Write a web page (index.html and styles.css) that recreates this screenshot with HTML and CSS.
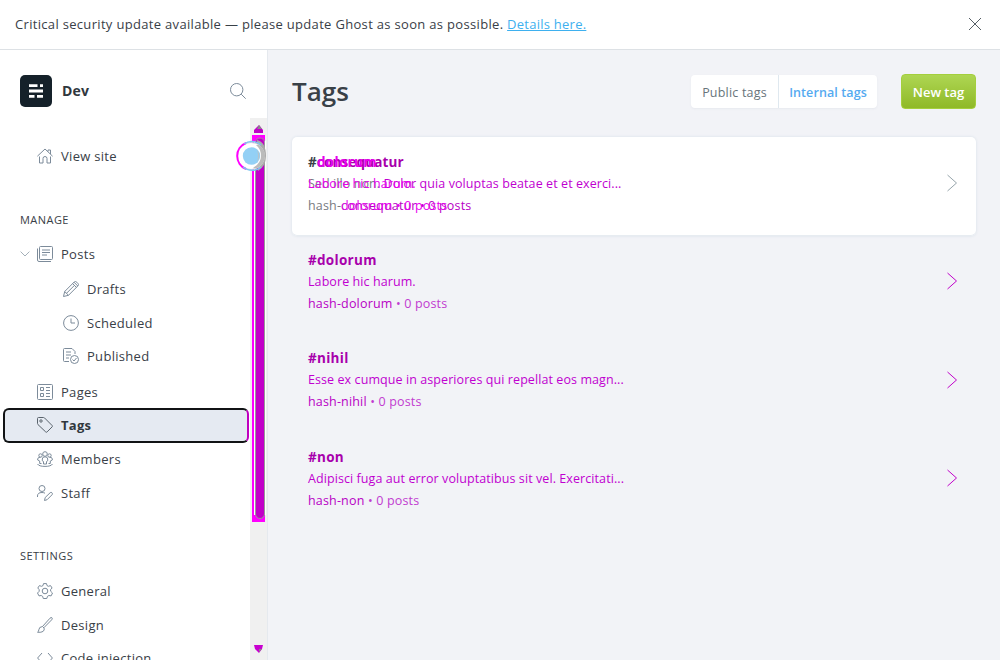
FILE: index.html
```html
<!DOCTYPE html>
<html lang="en">
<head>
<meta charset="utf-8">
<title>Tags</title>
<link rel="stylesheet" href="styles.css">
</head>
<body>
<div class="alert">
  <p class="alert-text"><span class="alert-msg">Critical security update available — please update Ghost as soon as possible.</span> <a class="alert-link">Details here.</a></p>
  <svg class="close" viewBox="0 0 14 14"><path d="M1 1l12 12M13 1L1 13"/></svg>
</div>
<div class="app">
  <aside class="sidebar">
    <header class="brand">
      <svg class="logo" viewBox="0 0 32 32"><rect width="32" height="32" rx="5" fill="#15212a"/><path d="M9 10.700h8.500M20 10.700h3M9 16h14M9 21.300h5.500M17 21.300h6" stroke="#fff" stroke-width="2.800"/></svg>
      <span class="brand-name">Dev</span>
      <svg class="icon search" viewBox="0 0 16 16"><circle cx="6.700" cy="6.700" r="6.200"/><path d="M11.200 11.200l4.500 4.500"/></svg>
    </header>
    <div class="nav-wrap">
      <nav class="nav">
        <div class="item"><svg class="icon" viewBox="0 0 16 16"><path d="M.4 8.200L8 1l7.600 7.200M2.500 8.500V15H6v-4.500a2 2 0 0 1 4 0V15h3.500V8.500M11 3.500V2h2.500v4"/></svg><span>View site</span></div>
        <h2 class="heading manage">MANAGE</h2>
        <div class="item parent"><svg class="chev" viewBox="0 0 10 6"><path d="M.6.6L5 5 9.400.6"/></svg><svg class="icon" viewBox="0 0 16 16"><rect x="2.500" y=".5" width="13" height="13" rx="1"/><path d="M.5 2.500v11.500q0 1.500 1.500 1.500h12M5 4h8M5 6.500h8M5 9h5"/></svg><span>Posts</span></div>
        <div class="sub">
          <div class="item"><svg class="icon" viewBox="0 0 16 16"><path d="M.5 15.500l1.200-5L11.300.9q1.200-1 2.600.4l.8.8q1.400 1.400.4 2.600L5.500 14.300zM1.700 10.500l3.800 3.800M9.600 2.600l3.800 3.800M3.500 12.300l8-8M11 1.200l3.800 3.800"/></svg><span>Drafts</span></div>
          <div class="item"><svg class="icon" viewBox="0 0 16 16"><circle cx="8" cy="8" r="7.400"/><path d="M8 3.500V8h4"/></svg><span>Scheduled</span></div>
          <div class="item"><svg class="icon" viewBox="0 0 16 16"><path d="M6 13.500H1.500q-1 0-1-1v-11q0-1 1-1H9l3 3V6M3 4h5M3 7h5M3 10h3"/><circle cx="11.500" cy="11.500" r="4"/><path d="M9.500 11.500l1.500 1.500 2.500-3"/></svg><span>Published</span></div>
        </div>
        <div class="item"><svg class="icon" viewBox="0 0 16 16"><rect x=".5" y=".5" width="15" height="15" rx="1"/><path d="M3.500 3.500h3v3h-3zM3.500 9.500h3v3h-3zM9 3.500h4M9 6.500h4M9 9.500h4M9 12.500h4"/></svg><span>Pages</span></div>
        <div class="item active"><svg class="icon" viewBox="0 0 16 16"><path d="M.5 1.500q0-1 1-1h5q.6 0 1 .4l7.600 7.600q.7.700 0 1.400l-5 5q-.7.700-1.400 0L.9 7.500q-.4-.4-.4-1z"/><circle cx="4" cy="4" r="1.200"/></svg><span>Tags</span></div>
        <div class="item"><svg class="icon" viewBox="0 0 16 16"><circle cx="8" cy="3" r="2.300"/><circle cx="3.500" cy="4.500" r="1.700"/><circle cx="12.500" cy="4.500" r="1.700"/><path d="M6.500 13V10.500L5.300 9.800V8q0-2.200 2.700-2.200T10.700 8v1.800l-1.200.7V13zM4.500 12.500H2.700V10L.7 9V8q0-1.800 2.800-1.800M11.500 12.500h1.800V10l2-1V8q0-1.800-2.800-1.800M.5 13q1.500 2.400 7.500 2.400T15.500 13"/></svg><span>Members</span></div>
        <div class="item"><svg class="icon" viewBox="0 0 16 16"><circle cx="5" cy="3.500" r="3"/><path d="M.5 12V11q0-3.500 4.500-3.500 1.800 0 3 .7M7.500 15.500l.7-3 5-4.800q1-.7 1.800.1.900.9.100 1.900l-5 5z"/></svg><span>Staff</span></div>
        <h2 class="heading settings">SETTINGS</h2>
        <div class="item"><svg class="icon" viewBox="0 0 16 16"><circle cx="8" cy="8" r="2.800"/><path d="M6.500.6h3l.5 2 1.400.7 2.100-.7 1.600 2.400-1.500 1.600v1.600L15.500 10l-1.400 2.900-2.200-.4-1.400.8-.7 2.200H6.300l-.7-2.200-1.400-.8-2.200.4L.5 10l1.700-1.700V6.700L.8 5l1.600-2.400 2.100.7L6 2.600z"/></svg><span>General</span></div>
        <div class="item"><svg class="icon" viewBox="0 0 16 16"><path d="M5.500 9.500L13 1.200q1.200-1.200 2-.4t-.3 2L6.800 10.800M5.500 9.500l1.600 1.600q.6 2-1 3.300-1.700 1.200-5.600.9 1.200-.8 1.300-2.500.2-3 3.700-3.300z"/></svg><span>Design</span></div>
        <div class="item"><svg class="icon" viewBox="0 0 16 16"><path d="M5 3L.6 8 5 13M11 3l4.400 5L11 13"/></svg><span>Code injection</span></div>
      </nav>
      <div class="track">
        <svg class="bar" viewBox="0 0 34 542">
          <path d="M16 0h17v542H16z" fill="#f0f0f0"/>
          <path d="M25 7l-5 5v3h9v-3z" fill="#c000c8"/><path d="M25 7l-2 4h5z" fill="#888"/>
          <path d="M18 17h13v387H18z" fill="#f0f"/><path d="M20 23h12v374H20z" fill="#fff"/>
          <rect x="21.500" y="20" width="9" height="380.500" rx="4.500" fill="#c200c8" stroke="#999"/>
          <path d="M20 527h9l-1 4-3 4-4-4z" fill="#c800d0"/><path d="M25 531h3l-3 3z" fill="#888"/>
          <path d="M23 22q9 2 9 16 0 10-8 15z" fill="#aaa"/>
          <circle cx="17" cy="38" r="13.500" fill="#fff" stroke="#ddd"/>
          <path d="M12 25a14 14 0 0 0 0 26" fill="none" stroke="#f0f" stroke-width="2"/>
          <path d="M10 26a14 14 0 0 1 17 1M9 49a14 14 0 0 0 18 0" fill="none" stroke="#7cc4ef" stroke-width="1.500"/>
          <path d="M25 27a13 13 0 0 1 0 22q-4 2-6 1 8-5 8-12t-5-11z" fill="#bbb"/>
          <circle cx="17.500" cy="38" r="8.700" fill="#93d0f5"/>
          <path d="M23 32a8.700 8.700 0 0 1 0 12q2-6 0-12z" fill="#b8c4ca"/>
        </svg>
      </div>
    </div>
  </aside>
  <main class="main">
    <header class="top">
      <h1 class="title">Tags</h1>
      <div class="actions">
        <div class="tabs"><span class="tab">Public tags</span><span class="tab on">Internal tags</span></div>
        <button class="new">New tag</button>
      </div>
    </header>
    <div class="list">
      <article class="row card">
        <div class="info">
          <h3 class="name long"><span class="dark">#c</span>onsequatur</h3>
          <p class="desc"><span class="gray">Sed illo non.</span> Dolor quia voluptas beatae et et exerci...</p>
          <p class="meta"><span class="gray">hash-c</span>onsequatur • 0 posts</p>
          <div class="ghost">
            <h3 class="name"><span class="clear">#</span>dolorum</h3>
            <p class="desc">Labore hic harum.</p>
            <p class="meta"><span class="clear">hash-</span>dolorum • 0 posts</p>
          </div>
        </div>
        <svg class="arrow muted" viewBox="0 0 10 18"><path d="M.5 1l9 8-9 8"/></svg>
      </article>
      <article class="row"><div class="info"><h3 class="name">#dolorum</h3><p class="desc">Labore hic harum.</p><p class="meta">hash-dolorum <span class="posts">• 0 posts</span></p></div><svg class="arrow" viewBox="0 0 10 18"><path d="M.5 1l9 8-9 8"/></svg></article>
      <article class="row"><div class="info"><h3 class="name">#nihil</h3><p class="desc">Esse ex cumque in asperiores qui repellat eos magn...</p><p class="meta">hash-nihil <span class="posts">• 0 posts</span></p></div><svg class="arrow" viewBox="0 0 10 18"><path d="M.5 1l9 8-9 8"/></svg></article>
      <article class="row"><div class="info"><h3 class="name">#non</h3><p class="desc">Adipisci fuga aut error voluptatibus sit vel. Exercitati...</p><p class="meta">hash-non <span class="posts">• 0 posts</span></p></div><svg class="arrow" viewBox="0 0 10 18"><path d="M.5 1l9 8-9 8"/></svg></article>
    </div>
  </main>
</div>
</body>
</html>
```
FILE: styles.css
```css
* { box-sizing: border-box; margin: 0; padding: 0; }
body { width: 1000px; height: 660px; overflow: hidden; background: #fff; color: #394047; font-family: "Open Sans", "Noto Sans", sans-serif; font-size: 13px; display: flex; flex-direction: column; }
svg { flex: none; fill: none; }
.alert { height: 50px; flex: none; border-bottom: 1px solid #dde1e5; display: flex; align-items: center; justify-content: space-between; padding: 0 18px 1px 15px; }
.alert-text { white-space: nowrap; font-size: 13px; letter-spacing: .32px; }
.alert-link { color: #3eb0ef; text-decoration: underline; letter-spacing: .25px; }
.close { width: 14px; height: 14px; stroke: #565f66; }
.app { flex: 1; min-height: 0; display: flex; }
.sidebar { width: 268px; flex: none; border-right: 1px solid #e5e9ee; display: flex; flex-direction: column; }
.brand { height: 68px; flex: none; display: flex; align-items: center; padding: 14px 21px 0 20px; }
.logo { width: 32px; height: 32px; }
.brand-name { flex: 1; margin-left: 10px; padding-bottom: 2px; font-size: 14px; letter-spacing: .2px; font-weight: 700; color: #30373d; }
.icon { width: 16px; height: 16px; stroke: #7c8b9a; stroke-width: 1; }
.nav-wrap { height: 542px; display: flex; overflow: hidden; }
.nav { width: 234px; flex: none; padding-top: 21px; }
.item { height: 33.6px; display: flex; align-items: center; gap: 8px; padding-left: 37px; font-size: 13px; letter-spacing: .3px; white-space: nowrap; }
.heading { font-size: 11px; line-height: 20px; font-weight: 500; letter-spacing: .45px; padding-left: 20px; }
.manage { margin: 37px 0 8px; }
.settings { margin: 36.5px 0 8px; }
.parent { padding-left: 20px; }
.chev { width: 10px; height: 6px; stroke: #a4b0b9; margin-right: -1px; }
.sub { padding: 1px 0 2px 26px; }
.active { width: 246px; height: 35px; margin: -.6px 0 -.4px 3px; padding-left: 32px; border: 2px solid #111315; border-right-color: #c000c0; border-radius: 6px; background: #e5eaf2; font-weight: 700; color: #30373d; }
.active .icon { stroke: #59636c; }
.track { width: 34px; }
.bar { width: 34px; height: 542px; display: block; }
.main { flex: 1; background: #f2f3f7; padding: 24px 24px 0; }
.top { height: 35px; display: flex; justify-content: space-between; align-items: center; }
.title { font-size: 26px; line-height: 35px; font-weight: 600; }
.actions { display: flex; align-items: center; gap: 24px; }
.tabs { width: 186px; height: 33px; display: flex; background: #fff; border-radius: 4px; box-shadow: 0 1px 2px #dfe3ea99; }
.tab { flex: 0 0 87px; display: flex; align-items: center; justify-content: center; font-size: 12.5px; letter-spacing: .2px; color: #68747b; white-space: nowrap; padding-top: 1px; }
.tab.on { flex-basis: 99px; border-left: 1px solid #dfe8ef; color: #55aaf0; font-weight: 600; letter-spacing: .1px; }
.new { width: 75px; height: 35px; border: 1px solid #a4cf3d; border-radius: 4px; background: linear-gradient(#aed653, #8fb927); color: #fff; font: 600 13px "Open Sans", sans-serif; white-space: nowrap; }
.list { margin-top: 28px; }
.row { height: 98.5px; padding: 13.4px 19px 0 16px; display: flex; justify-content: space-between; color: #b800c5; white-space: nowrap; }
.card { background: #fff; border-radius: 5px; box-shadow: 0 0 3px #d7dfe8, inset 0 -1px #e7ecf1; padding-top: 14px; }
.info { position: relative; }
.name { font-size: 13.5px; line-height: 22px; font-weight: 700; letter-spacing: .3px; color: #a800ac; }
.long { letter-spacing: .15px; }
.desc { font-size: 12.5px; line-height: 22px; letter-spacing: .08px; color: #c000d0; }
.meta { font-size: 12.5px; line-height: 21px; letter-spacing: .17px; }
.dark { color: #394047; }
.gray { color: #777b80; }
.posts { color: #c13bd0; }
.clear { visibility: hidden; }
.ghost { position: absolute; left: 0; top: 0; width: 110px; }
.ghost .name, .ghost .desc, .ghost .meta { color: #e800ee; }
.arrow { width: 10px; height: 18px; margin-top: 23.6px; stroke: #c000ca; }
.arrow.muted { stroke: #96a4ab; margin-top: 23px; }
```
